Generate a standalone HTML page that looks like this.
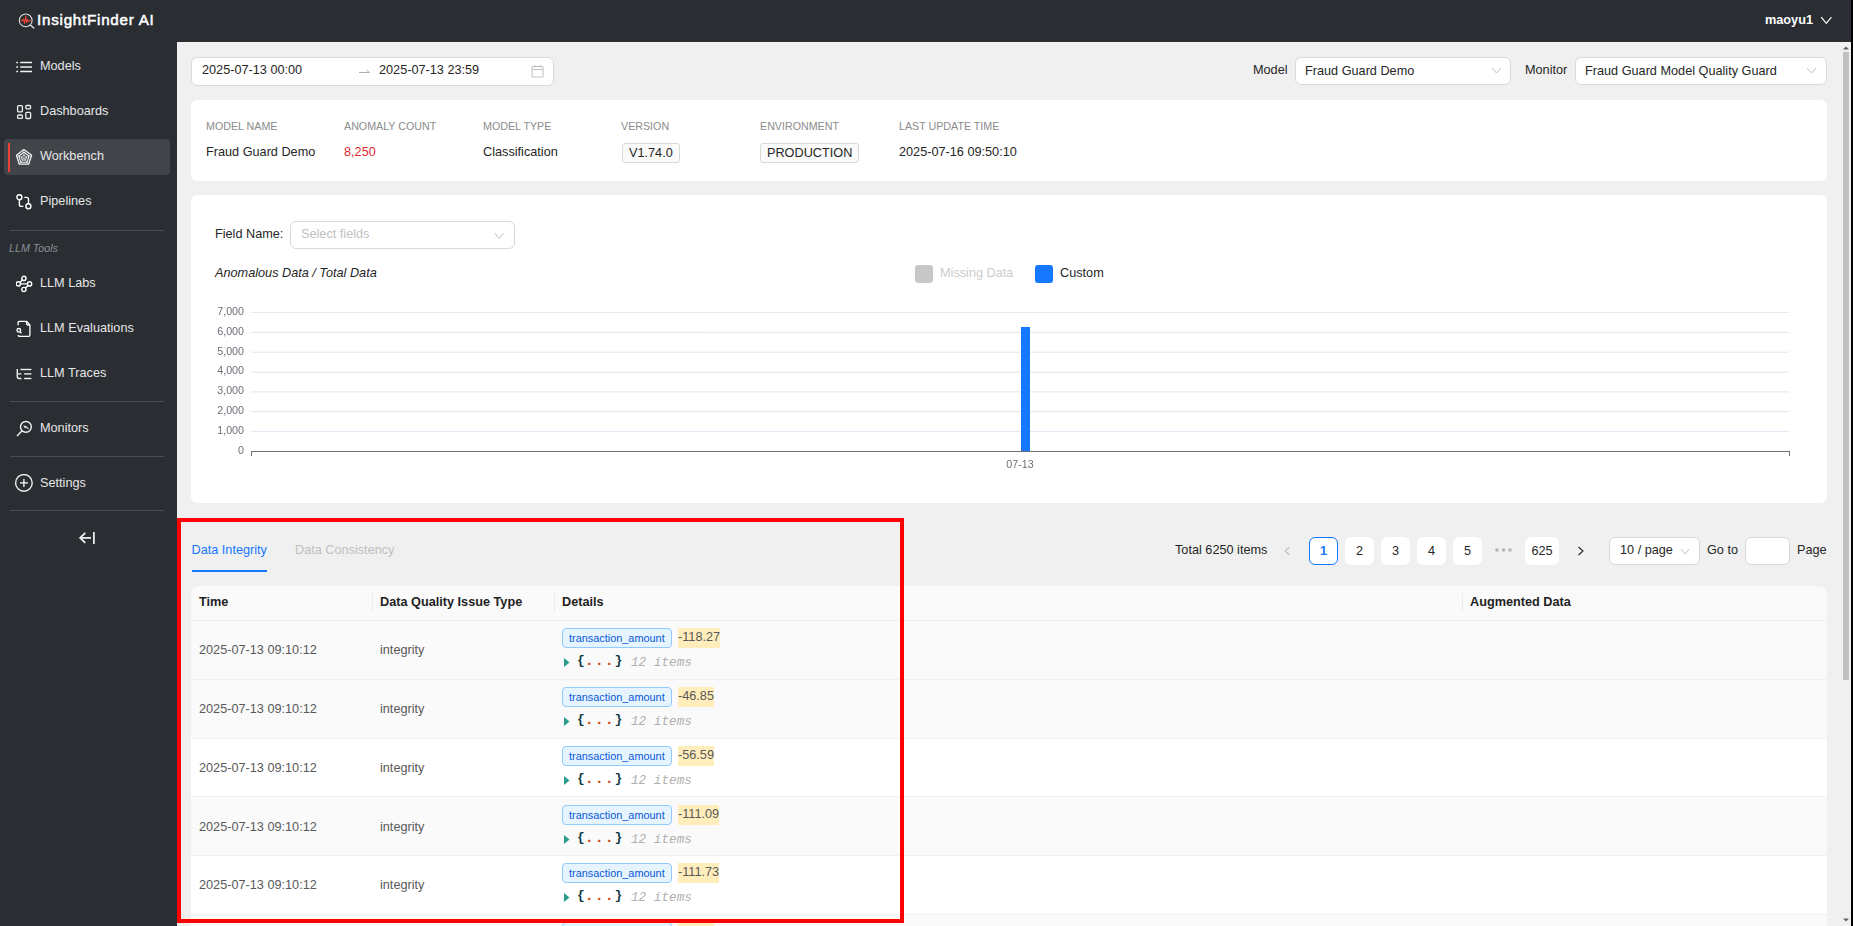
<!DOCTYPE html>
<html><head><meta charset="utf-8">
<style>
*{box-sizing:border-box;margin:0;padding:0}
html,body{width:1853px;height:926px;overflow:hidden;background:#2a2e33;font-family:"Liberation Sans",sans-serif;color:#262626}
.abs{position:absolute}
#top{position:absolute;left:0;top:0;width:1853px;height:42px;background:#2a2e33}
#side{position:absolute;left:0;top:42px;width:177px;height:884px;background:#2a2e33}
#main{position:absolute;left:177px;top:42px;width:1661px;height:884px;background:#f0f0f0;overflow:hidden}
#sb{position:absolute;left:1838px;top:42px;width:13px;height:884px;background:#f0f0f0}
#edge{position:absolute;left:1851px;top:0;width:2px;height:926px;background:#000}
.nav{position:absolute;left:0;width:177px;height:34px;color:#e6e6e6;font-size:12.7px}
.nav .t{position:absolute;left:40px;top:9px;line-height:16px}
.nav svg{position:absolute;left:16px;top:9px}
.sep{position:absolute;left:10px;width:154px;height:1px;background:#4a4e52}
.card{position:absolute;background:#fff;border-radius:6px}
.lbl{position:absolute;font-size:10.7px;color:#8c8c8c;line-height:13px}
.val{position:absolute;font-size:12.7px;color:#262626;line-height:15px}
.sel{position:absolute;background:#fff;border:1px solid #d9d9d9;border-radius:6px}
.txt{position:absolute;white-space:nowrap;line-height:1}
.pg{position:absolute;top:537px;width:29px;height:28px;background:#fff;border-radius:6px;font-size:12.7px;color:#262626;text-align:center;line-height:28px}
.pg.act{border:1px solid #1677ff;color:#1677ff;line-height:26px;font-weight:bold}
.th{font-size:12.7px;font-weight:bold;color:#1f1f1f}
.cell{font-size:12.7px;color:#595959}
.tag{height:20px;padding:0 6px;background:#e6f4ff;border:1px solid #91caff;border-radius:4px;font-size:10.9px;line-height:18px;color:#0958d9;white-space:nowrap}
.mark{height:20px;background:#ffeebb;font-size:12.7px;line-height:18px;color:#595959;white-space:nowrap}
.json{font-family:"Liberation Mono",monospace;font-size:12.7px;color:#073642}
.json .dots{color:#cb4b16;letter-spacing:1px;font-weight:bold;font-size:15px;position:relative;top:1px}
.json.it{font-style:italic;color:#b0b0b0;margin-top:2px}
</style></head><body>
<div id="top">
  <svg class="abs" style="left:17px;top:11px" width="20" height="20" viewBox="0 0 20 20">
    <circle cx="8.7" cy="9.4" r="6.4" fill="none" stroke="#dcdcdc" stroke-width="1.1"/>
    <line x1="13.3" y1="14" x2="16.8" y2="17" stroke="#dcdcdc" stroke-width="1.5" stroke-linecap="round"/>
    <path d="M3.6 9.6 L5.6 9.6 L6.6 8 L7.6 12.4 L8.7 5.2 L9.6 11.6 L10.5 8.6 L11.3 10.2 L14.2 9.6" fill="none" stroke="#ee4433" stroke-width="1.05" stroke-linejoin="round"/>
  </svg>
  <div class="txt" style="left:37px;top:12px;font-size:15.2px;font-weight:normal;color:#fff;-webkit-text-stroke:0.5px #fff;letter-spacing:0.75px">InsightFinder AI</div>
  <div class="txt" style="left:1765px;top:14px;font-size:12.7px;font-weight:bold;color:#fff">maoyu1</div>
  <svg class="abs" style="left:1820px;top:16px" width="13" height="9" viewBox="0 0 13 9"><path d="M1.2 1.2 L6.3 7.3 L11.4 1.2" fill="none" stroke="#fff" stroke-width="1.2"/></svg>
</div>
<div id="side"></div>

<div class="nav" style="top:49px">
  <svg width="18" height="18" viewBox="0 0 18 18" fill="none" stroke="#f2f2f2" stroke-width="1.5"><line x1="0.3" y1="4.5" x2="2.1" y2="4.5"/><line x1="4.2" y1="4.5" x2="16" y2="4.5"/><line x1="0.3" y1="9" x2="2.1" y2="9"/><line x1="4.2" y1="9" x2="16" y2="9"/><line x1="0.3" y1="13.5" x2="2.1" y2="13.5"/><line x1="4.2" y1="13.5" x2="16" y2="13.5"/></svg>
  <div class="t">Models</div></div>
<div class="nav" style="top:94px">
  <svg width="18" height="18" viewBox="0 0 18 18" fill="none" stroke="#eeeeee" stroke-width="1.3"><rect x="1.6" y="2.6" width="4.8" height="6.3" rx="1"/><rect x="9.8" y="2.5" width="4.8" height="3.3" rx="1"/><rect x="1.6" y="12" width="4.8" height="3.4" rx="1"/><rect x="9.8" y="9.3" width="4.8" height="6.2" rx="1"/></svg>
  <div class="t">Dashboards</div></div>
<div class="abs" style="left:4px;top:139px;width:166px;height:36px;background:#41454a;border-radius:4px"></div>
<div class="abs" style="left:8px;top:142.5px;width:2px;height:29.7px;background:#ee4136"></div>
<div class="nav" style="top:139px">
  <svg width="18" height="18" viewBox="0 0 18 18" fill="none" stroke="#f0f0f0" stroke-width="1.3" stroke-linejoin="round"><path d="M7.9 1.6 L15.6 7.3 L12.6 16.2 L3.3 16.2 L0.5 7.3 Z"/><path d="M7.9 4.2 L13.0 8.0 L11.1 14.2 L4.7 14.2 L2.8 8.0 Z" stroke-width="1.1"/><path d="M7.9 6.9 L10.6 8.9 L9.6 12.1 L6.2 12.1 L5.2 8.9 Z" stroke-width="0.9"/><path d="M7.9 1.6 L7.9 10.2 M15.6 7.3 L7.9 10.2 M12.6 16.2 L7.9 10.2 M3.3 16.2 L7.9 10.2 M0.5 7.3 L7.9 10.2" stroke-width="0.6"/></svg>
  <div class="t">Workbench</div></div>
<div class="nav" style="top:184px">
  <svg width="18" height="18" viewBox="0 0 18 18" fill="none" stroke="#ffffff" stroke-width="1.4"><circle cx="3.4" cy="4.3" r="2.5"/><circle cx="12.4" cy="13.3" r="2.5"/><path d="M3.4 6.8 L3.4 11.5 Q3.4 13.4 5.3 13.4 L7.4 13.4"/><path d="M8.3 4.4 L10.5 4.4 Q12.5 4.4 12.5 6.4 L12.5 10.8"/></svg>
  <div class="t">Pipelines</div></div>
<div class="sep" style="top:230px"></div>
<div class="txt" style="left:9px;top:243px;font-size:10.7px;font-style:italic;color:#8a8e93">LLM Tools</div>
<div class="nav" style="top:266px">
  <svg width="18" height="18" viewBox="0 0 18 18" fill="none" stroke="#ffffff" stroke-width="1.4"><circle cx="7.9" cy="3.4" r="2.1"/><circle cx="2.3" cy="8.9" r="2.1"/><circle cx="13.6" cy="8.9" r="2.1"/><circle cx="7.9" cy="14.5" r="2.1"/><path d="M6.5 4.9 L3.8 7.5 M4.4 8.9 L11.5 8.9 M12.2 10.4 L9.4 13.1"/></svg>
  <div class="t">LLM Labs</div></div>
<div class="nav" style="top:311px">
  <svg width="18" height="18" viewBox="0 0 18 18" fill="none" stroke="#ffffff" stroke-width="1.3" stroke-linejoin="round"><path d="M2.1 5.3 L2.1 2.6 Q2.1 1.3 3.4 1.3 L10.5 1.3 L13.9 5 L13.9 15 Q13.9 16.3 12.6 16.3 L3.5 16.3 Q2.3 16.3 2.3 15"/><path d="M10.5 1.3 L10.5 3.5 Q10.5 5 12 5 L13.9 5"/><circle cx="2.8" cy="10.3" r="1.8"/><line x1="4.1" y1="11.7" x2="5.4" y2="13.3"/></svg>
  <div class="t">LLM Evaluations</div></div>
<div class="nav" style="top:356px">
  <svg width="18" height="18" viewBox="0 0 18 18" fill="none" stroke="#f2f2f2" stroke-width="1.4"><path d="M1.3 4 L1.3 11.6 Q1.3 13.5 3.2 13.5 L5.4 13.5 M1.3 8.9 L5.4 8.9"/><line x1="4.4" y1="4.5" x2="15.4" y2="4.5"/><line x1="8.1" y1="8.9" x2="15.4" y2="8.9"/><line x1="8.1" y1="13.5" x2="15.4" y2="13.5"/></svg>
  <div class="t">LLM Traces</div></div>
<div class="sep" style="top:401px"></div>
<div class="nav" style="top:411px">
  <svg width="18" height="18" viewBox="0 0 18 18" fill="none" stroke="#f2f2f2" stroke-width="1.4"><circle cx="9.9" cy="6.9" r="5.4"/><line x1="6.1" y1="10.8" x2="1" y2="15.9"/><path d="M7.8 5.5 L9.2 7.6 L9.9 6.6 L12.5 8.9" stroke-width="1.1"/></svg>
  <div class="t">Monitors</div></div>
<div class="sep" style="top:456px"></div>
<div class="nav" style="top:466px">
  <svg width="20" height="20" viewBox="0 0 20 20" style="left:14px;top:8px" fill="none" stroke="#f0f0f0" stroke-width="1.4"><circle cx="9.9" cy="8.9" r="8.3"/><line x1="9.9" y1="5" x2="9.9" y2="13"/><line x1="6" y1="8.9" x2="13.9" y2="8.9"/></svg>
  <div class="t">Settings</div></div>
<div class="sep" style="top:510px"></div>
<svg class="abs" style="left:79px;top:531px" width="17" height="14" viewBox="0 0 17 14" fill="none" stroke="#f4f4f4" stroke-width="1.7"><line x1="14.9" y1="0.9" x2="14.9" y2="12.9"/><line x1="1" y1="6.9" x2="12" y2="6.9"/><path d="M6.3 1.9 L1.1 6.9 L6.3 11.9"/></svg>

<div id="main"></div>
<!-- date range -->
<div class="sel" style="left:191px;top:57px;width:363px;height:29px"></div>
<div class="txt" style="left:202px;top:64px;font-size:12.7px;color:#262626">2025-07-13 00:00</div>
<svg class="abs" style="left:358px;top:66px" width="13" height="8" viewBox="0 0 13 8"><path d="M1 6.5 L11.5 6.5 L8.5 4" fill="none" stroke="#b0b0b0" stroke-width="1"/></svg>
<div class="txt" style="left:379px;top:64px;font-size:12.7px;color:#262626">2025-07-13 23:59</div>
<svg class="abs" style="left:531px;top:64px" width="13" height="14" viewBox="0 0 13 14" fill="none" stroke="#bfbfbf" stroke-width="1"><rect x="1" y="2.5" width="11" height="10.5" rx="0.3"/><line x1="1" y1="5.5" x2="12" y2="5.5"/><line x1="4" y1="1" x2="4" y2="3.5"/><line x1="9" y1="1" x2="9" y2="3.5"/></svg>
<!-- model/monitor -->
<div class="txt" style="left:1253px;top:64px;font-size:12.7px;color:#262626">Model</div>
<div class="sel" style="left:1295px;top:57px;width:216px;height:28px"></div>
<div class="txt" style="left:1305px;top:65px;font-size:12.7px;color:#262626">Fraud Guard Demo</div>
<svg class="abs" style="left:1490.5px;top:67px" width="11" height="7" viewBox="0 0 11 7"><path d="M1 1 L5.5 6 L10 1" fill="none" stroke="#bfbfbf" stroke-width="1"/></svg>
<div class="txt" style="left:1525px;top:64px;font-size:12.7px;color:#262626">Monitor</div>
<div class="sel" style="left:1575px;top:57px;width:252px;height:28px"></div>
<div class="txt" style="left:1585px;top:65px;font-size:12.7px;color:#262626">Fraud Guard Model Quality Guard</div>
<svg class="abs" style="left:1806px;top:67px" width="11" height="7" viewBox="0 0 11 7"><path d="M1 1 L5.5 6 L10 1" fill="none" stroke="#bfbfbf" stroke-width="1"/></svg>
<!-- info card -->
<div class="card" style="left:191px;top:100px;width:1636px;height:81px"></div>
<div class="lbl" style="left:206px;top:120px">MODEL NAME</div>
<div class="val" style="left:206px;top:145px">Fraud Guard Demo</div>
<div class="lbl" style="left:344px;top:120px">ANOMALY COUNT</div>
<div class="val" style="left:344px;top:145px;color:#e0282e">8,250</div>
<div class="lbl" style="left:483px;top:120px">MODEL TYPE</div>
<div class="val" style="left:483px;top:145px">Classification</div>
<div class="lbl" style="left:621px;top:120px">VERSION</div>
<div class="abs" style="left:622px;top:143px;width:58px;height:20px;background:#fafafa;border:1px solid #d9d9d9;border-radius:3px"></div>
<div class="val" style="left:629px;top:146px">V1.74.0</div>
<div class="lbl" style="left:760px;top:120px">ENVIRONMENT</div>
<div class="abs" style="left:760px;top:143px;width:99px;height:20px;background:#fafafa;border:1px solid #d9d9d9;border-radius:3px"></div>
<div class="val" style="left:767px;top:146px">PRODUCTION</div>
<div class="lbl" style="left:899px;top:120px">LAST UPDATE TIME</div>
<div class="val" style="left:899px;top:145px">2025-07-16 09:50:10</div>
<!-- chart card -->
<div class="card" style="left:191px;top:195px;width:1636px;height:308px"></div>
<div class="txt" style="left:215px;top:228px;font-size:12.7px;color:#262626">Field Name:</div>
<div class="sel" style="left:290px;top:221px;width:225px;height:28px"></div>
<div class="txt" style="left:301px;top:228px;font-size:12.7px;color:#bfbfbf">Select fields</div>
<svg class="abs" style="left:494px;top:231.5px" width="11" height="8" viewBox="0 0 11 8"><path d="M1 1 L5.2 6.6 L9.4 1" fill="none" stroke="#bfbfbf" stroke-width="1"/></svg>
<div class="txt" style="left:215px;top:267px;font-size:12.7px;font-style:italic;color:#262626">Anomalous Data / Total Data</div>
<div class="abs" style="left:915px;top:265px;width:18px;height:18px;background:#c8c8c8;border-radius:3px"></div>
<div class="txt" style="left:940px;top:267px;font-size:12.7px;color:#cccccc">Missing Data</div>
<div class="abs" style="left:1035px;top:265px;width:18px;height:18px;background:#1677ff;border-radius:3px"></div>
<div class="txt" style="left:1060px;top:267px;font-size:12.7px;color:#262626">Custom</div>
<svg class="abs" style="left:191px;top:300px;will-change:transform" width="1636" height="180" viewBox="191 300 1636 180" font-family="Liberation Sans" font-size="10.7" fill="#6e7079">
  <g stroke="#e0e6f1" stroke-width="1">
    <line x1="251" y1="312.4" x2="1789" y2="312.4"/>
    <line x1="251" y1="332.3" x2="1789" y2="332.3"/>
    <line x1="251" y1="352.2" x2="1789" y2="352.2"/>
    <line x1="251" y1="372.2" x2="1789" y2="372.2"/>
    <line x1="251" y1="391.9" x2="1789" y2="391.9"/>
    <line x1="251" y1="411.6" x2="1789" y2="411.6"/>
    <line x1="251" y1="431.4" x2="1789" y2="431.4"/>
  </g>
  <line x1="251" y1="451.5" x2="1789.5" y2="451.5" stroke="#6e7079" stroke-width="1"/>
  <line x1="251.5" y1="451" x2="251.5" y2="456" stroke="#6e7079" stroke-width="1"/>
  <line x1="1789.5" y1="451" x2="1789.5" y2="456" stroke="#6e7079" stroke-width="1"/>
  <g text-anchor="end">
    <text x="244" y="315">7,000</text>
    <text x="244" y="335">6,000</text>
    <text x="244" y="355">5,000</text>
    <text x="244" y="374">4,000</text>
    <text x="244" y="394">3,000</text>
    <text x="244" y="414">2,000</text>
    <text x="244" y="434">1,000</text>
    <text x="244" y="454">0</text>
  </g>
  <rect x="1021" y="327" width="9" height="124" fill="#1677ff"/>
  <text x="1020" y="468" text-anchor="middle">07-13</text>
</svg>


<!-- tabs -->
<div class="txt" style="left:191.5px;top:544px;font-size:12.7px;color:#1677ff">Data Integrity</div>
<div class="abs" style="left:192px;top:570px;width:75px;height:2px;background:#1677ff"></div>
<div class="txt" style="left:295px;top:544px;font-size:12.7px;color:#bfbfbf">Data Consistency</div>
<!-- pagination -->
<div class="txt" style="left:1175px;top:544px;font-size:12.7px;color:#262626">Total 6250 items</div>
<svg class="abs" style="left:1283px;top:546px" width="8" height="10" viewBox="0 0 8 10"><path d="M6.5 1 L2 5 L6.5 9" fill="none" stroke="#bfbfbf" stroke-width="1.1"/></svg>
<div class="pg act" style="left:1309px">1</div>
<div class="pg" style="left:1345px">2</div>
<div class="pg" style="left:1381px">3</div>
<div class="pg" style="left:1417px">4</div>
<div class="pg" style="left:1453px">5</div>
<svg class="abs" style="left:1494px;top:547px" width="20" height="6" viewBox="0 0 20 6" fill="#b4b4b4"><circle cx="3" cy="3" r="1.8"/><circle cx="9.5" cy="3" r="1.8"/><circle cx="16" cy="3" r="1.8"/></svg>
<div class="pg" style="left:1525px;width:34px">625</div>
<svg class="abs" style="left:1577px;top:546px" width="8" height="10" viewBox="0 0 8 10"><path d="M1.5 1 L6 5 L1.5 9" fill="none" stroke="#262626" stroke-width="1.1"/></svg>
<div class="sel" style="left:1609px;top:537px;width:91px;height:28px"></div>
<div class="txt" style="left:1620px;top:544px;font-size:12.7px;color:#262626">10 / page</div>
<svg class="abs" style="left:1680px;top:548px" width="10" height="7" viewBox="0 0 10 7"><path d="M1 1 L5 6 L9 1" fill="none" stroke="#bfbfbf" stroke-width="1"/></svg>
<div class="txt" style="left:1707px;top:544px;font-size:12.7px;color:#262626">Go to</div>
<div class="sel" style="left:1745px;top:537px;width:45px;height:28px"></div>
<div class="txt" style="left:1797px;top:544px;font-size:12.7px;color:#262626">Page</div>
<!-- table -->
<div class="abs" style="left:191px;top:586px;width:1636px;height:40px;background:#fafafa;border-radius:8px 8px 0 0"></div>
<div class="txt th" style="left:199px;top:596px">Time</div>
<div class="abs" style="left:372px;top:593px;width:1px;height:19px;background:#ececec"></div>
<div class="txt th" style="left:380px;top:596px">Data Quality Issue Type</div>
<div class="abs" style="left:554px;top:593px;width:1px;height:19px;background:#ececec"></div>
<div class="txt th" style="left:562px;top:596px">Details</div>
<div class="abs" style="left:1462px;top:593px;width:1px;height:19px;background:#ececec"></div>
<div class="txt th" style="left:1470px;top:596px">Augmented Data</div>
<div class="abs" style="left:191px;top:620px;width:1636px;height:59px;background:#fafafa;border-top:1px solid #f0f0f0"></div>
<div class="txt cell" style="left:199px;top:644px">2025-07-13 09:10:12</div>
<div class="txt cell" style="left:380px;top:644px">integrity</div>
<div class="abs tag" style="left:562px;top:628px">transaction_amount</div>
<div class="abs mark" style="left:678px;top:628px">-118.27</div>
<svg class="abs" style="left:564px;top:658px" width="6" height="9" viewBox="0 0 6 9"><path d="M0 0 L5.5 4.5 L0 9 Z" fill="#2a9d8f"/></svg>
<div class="txt json" style="left:577px;top:653px"><b style="color:#073642">{</b><span class="dots">...</span><b style="color:#073642">}</b></div>
<div class="txt json it" style="left:631px;top:655px">12 items</div>
<div class="abs" style="left:191px;top:679px;width:1636px;height:59px;background:#fafafa;border-top:1px solid #f0f0f0"></div>
<div class="txt cell" style="left:199px;top:703px">2025-07-13 09:10:12</div>
<div class="txt cell" style="left:380px;top:703px">integrity</div>
<div class="abs tag" style="left:562px;top:687px">transaction_amount</div>
<div class="abs mark" style="left:678px;top:687px">-46.85</div>
<svg class="abs" style="left:564px;top:717px" width="6" height="9" viewBox="0 0 6 9"><path d="M0 0 L5.5 4.5 L0 9 Z" fill="#2a9d8f"/></svg>
<div class="txt json" style="left:577px;top:712px"><b style="color:#073642">{</b><span class="dots">...</span><b style="color:#073642">}</b></div>
<div class="txt json it" style="left:631px;top:714px">12 items</div>
<div class="abs" style="left:191px;top:738px;width:1636px;height:58px;background:#ffffff;border-top:1px solid #f0f0f0"></div>
<div class="txt cell" style="left:199px;top:762px">2025-07-13 09:10:12</div>
<div class="txt cell" style="left:380px;top:762px">integrity</div>
<div class="abs tag" style="left:562px;top:746px">transaction_amount</div>
<div class="abs mark" style="left:678px;top:746px">-56.59</div>
<svg class="abs" style="left:564px;top:776px" width="6" height="9" viewBox="0 0 6 9"><path d="M0 0 L5.5 4.5 L0 9 Z" fill="#2a9d8f"/></svg>
<div class="txt json" style="left:577px;top:771px"><b style="color:#073642">{</b><span class="dots">...</span><b style="color:#073642">}</b></div>
<div class="txt json it" style="left:631px;top:773px">12 items</div>
<div class="abs" style="left:191px;top:796px;width:1636px;height:59px;background:#fafafa;border-top:1px solid #f0f0f0"></div>
<div class="txt cell" style="left:199px;top:821px">2025-07-13 09:10:12</div>
<div class="txt cell" style="left:380px;top:821px">integrity</div>
<div class="abs tag" style="left:562px;top:805px">transaction_amount</div>
<div class="abs mark" style="left:678px;top:805px">-111.09</div>
<svg class="abs" style="left:564px;top:835px" width="6" height="9" viewBox="0 0 6 9"><path d="M0 0 L5.5 4.5 L0 9 Z" fill="#2a9d8f"/></svg>
<div class="txt json" style="left:577px;top:830px"><b style="color:#073642">{</b><span class="dots">...</span><b style="color:#073642">}</b></div>
<div class="txt json it" style="left:631px;top:832px">12 items</div>
<div class="abs" style="left:191px;top:855px;width:1636px;height:59px;background:#ffffff;border-top:1px solid #f0f0f0"></div>
<div class="txt cell" style="left:199px;top:879px">2025-07-13 09:10:12</div>
<div class="txt cell" style="left:380px;top:879px">integrity</div>
<div class="abs tag" style="left:562px;top:863px">transaction_amount</div>
<div class="abs mark" style="left:678px;top:863px">-111.73</div>
<svg class="abs" style="left:564px;top:893px" width="6" height="9" viewBox="0 0 6 9"><path d="M0 0 L5.5 4.5 L0 9 Z" fill="#2a9d8f"/></svg>
<div class="txt json" style="left:577px;top:888px"><b style="color:#073642">{</b><span class="dots">...</span><b style="color:#073642">}</b></div>
<div class="txt json it" style="left:631px;top:890px">12 items</div>
<div class="abs" style="left:191px;top:914px;width:1636px;height:59px;background:#fafafa;border-top:1px solid #f0f0f0"></div>
<div class="txt cell" style="left:199px;top:938px">2025-07-13 09:10:12</div>
<div class="txt cell" style="left:380px;top:938px">integrity</div>
<div class="abs tag" style="left:562px;top:922px">transaction_amount</div>
<div class="abs mark" style="left:678px;top:922px">-46.85</div>
<svg class="abs" style="left:564px;top:952px" width="6" height="9" viewBox="0 0 6 9"><path d="M0 0 L5.5 4.5 L0 9 Z" fill="#2a9d8f"/></svg>
<div class="txt json" style="left:577px;top:947px"><b style="color:#073642">{</b><span class="dots">...</span><b style="color:#073642">}</b></div>
<div class="txt json it" style="left:631px;top:949px">12 items</div>

<div class="abs" style="left:177px;top:518px;width:727px;height:405px;border:4px solid #ff0000"></div>
<div id="sb"></div>


<div class="abs" style="left:1843px;top:52px;width:6px;height:628px;background:#c1c1c1"></div>
<svg class="abs" style="left:1843px;top:46px" width="6" height="4" viewBox="0 0 6 4"><path d="M0 3.5 L3 0.5 L6 3.5 Z" fill="#606060"/></svg>
<svg class="abs" style="left:1843px;top:918px" width="6" height="4" viewBox="0 0 6 4"><path d="M0 0.5 L3 3.5 L6 0.5 Z" fill="#606060"/></svg>
<div id="edge"></div>
</body></html>
